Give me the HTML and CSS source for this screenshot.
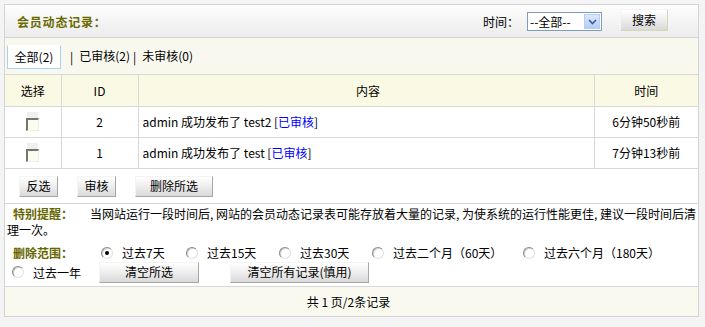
FILE: index.html
```html
<!DOCTYPE html>
<html>
<head>
<meta charset="utf-8">
<link rel="stylesheet" href="styles.css">
</head>
<body>
<div class="box">
  <div class="head">
    <div class="title">会员动态记录：</div>
    <div class="search">
      <span class="lbl">时间：</span>
      <span class="sel"><span class="sel-text">--全部--</span><span class="sel-btn"><svg width="9" height="6" viewBox="0 0 9 6"><path d="M1 1 L4.5 4.5 L8 1" fill="none" stroke="#3a5f9f" stroke-width="1.6"/></svg></span></span>
      <span class="btn btn-search">搜索</span>
    </div>
  </div>
  <div class="tabs">
    <span class="tab active">全部(2)</span>
    <span class="tab-sep">|</span>
    <span class="tab">已审核(2)</span>
    <span class="tab-sep">|</span>
    <span class="tab">未审核(0)</span>
  </div>
  <table class="grid">
    <tr class="hdr">
      <td class="c1">选择</td>
      <td class="c2">ID</td>
      <td class="c3 center">内容</td>
      <td class="c4">时间</td>
    </tr>
    <tr>
      <td class="c1"><span class="chk"></span></td>
      <td class="c2">2</td>
      <td class="c3">admin 成功发布了 test2 [<a class="link">已审核</a>]</td>
      <td class="c4">6分钟50秒前</td>
    </tr>
    <tr>
      <td class="c1"><span class="chk"></span></td>
      <td class="c2">1</td>
      <td class="c3">admin 成功发布了 test [<a class="link">已审核</a>]</td>
      <td class="c4">7分钟13秒前</td>
    </tr>
  </table>
  <div class="actions">
    <span class="btn b-small">反选</span>
    <span class="btn b-small">审核</span>
    <span class="btn b-wide">删除所选</span>
  </div>
  <div class="notice">
    <p class="tip"><b class="olive tip-label">特别提醒：</b><span>当网站运行一段时间后, 网站的会员动态记录表可能存放着大量的记录, 为使系统的运行性能更佳, 建议一段时间后清</span><span>理一次。</span></p>
    <div class="range">
      <b class="olive range-label">删除范围：</b>
      <span class="opt w1"><span class="radio on"></span>过去7天</span>
      <span class="opt w2"><span class="radio"></span>过去15天</span>
      <span class="opt w3"><span class="radio"></span>过去30天</span>
      <span class="opt w4"><span class="radio"></span>过去二个月（60天）</span>
      <span class="opt"><span class="radio"></span>过去六个月（180天）</span>
    </div>
    <div class="range2">
      <span class="opt w6"><span class="radio"></span>过去一年</span>
      <span class="btn b-clear1">清空所选</span>
      <span class="btn b-clear2">清空所有记录(慎用)</span>
    </div>
  </div>
  <div class="foot">共 1 页/2条记录</div>
</div>
</body>
</html>
```
FILE: styles.css
```css
* { box-sizing: border-box; }
html, body { background: #f4f4f4; }
body {
  margin: 4px;
  font-family: "Noto Sans CJK SC", "Liberation Sans", sans-serif;
  font-size: 12px;
  color: #000;
}
.box {
  width: 695px;
  background: #fff;
  border: 1px solid #d4d4d4;
}
.head {
  height: 33px;
  border-bottom: 1px solid #d4d4d4;
  background: linear-gradient(#fdfdfd, #ececec);
  display: flex;
  align-items: center;
  justify-content: space-between;
  padding: 0 30px 0 12px;
}
.title { font-weight: bold; color: #6a6a00; font-size: 12px; letter-spacing: 0.8px; }
.search { display: flex; align-items: center; }
.lbl { margin-right: 8px; }
.sel {
  display: flex; align-items: center;
  width: 75px; height: 19px;
  border: 1px solid #7f9db9; background: #fff;
  padding: 0 1px 0 2px;
  justify-content: space-between;
  margin-top: 1px;
}
.sel-text { line-height: 16px; }
.sel-btn {
  width: 16px; height: 15px;
  background: linear-gradient(#dce8fc, #b4ccf6);
  border: 1px solid #b8cdf2;
  display: flex; align-items: center; justify-content: center;
}
.btn {
  display: inline-flex; align-items: center; justify-content: center;
  height: 21px;
  background: linear-gradient(#ffffff, #f1f1f1 40%, #d9d9d9);
  border: 1px solid;
  border-color: #f4f4f4 #a6a6a6 #a6a6a6 #f4f4f4;
  line-height: 16px;
}
.btn-search { width: 48px; height: 22px; margin-left: 18px; margin-bottom: 2px; border-color: #f4f4f4 #d7d7b8 #d7d7b8 #f4f4f4; }
.tabs {
  height: 37px;
  border-bottom: 1px solid #d8d8d8;
  background: #f8f8ef;
  display: flex; align-items: flex-start;
  padding: 7px 0 0 2px;
}
.tab { line-height: 22px; }
.tab.active {
  height: 24px; width: 54px;
  background: #fff;
  border: 1px solid #a9d0ee;
  border-top-color: #fff;
  text-align: center;
  margin-right: 6px;
}
.tab-sep { line-height: 24px; margin: 0 6px 0 2px; }
.tab + .tab-sep { margin: 0 6px 0 3px; }
.grid { border-collapse: collapse; width: 693px; table-layout: fixed; }
.grid td {
  height: 31px;
  border-bottom: 1px solid #d8d8d8;
  border-right: 1px solid #d8d8d8;
  text-align: center;
  padding: 0;
}
.grid td.c4 { border-right: none; }
.hdr td { background: #fafae4; }
.c1 { width: 56px; }
.c2 { width: 77px; }
.c3 { width: 456px; }
.grid td.c3 { text-align: left; padding-left: 4px; }
.grid td.c3.center { text-align: center; }
.link { color: #0000ff; }
.chk {
  display: inline-block;
  width: 13px; height: 13px;
  background: #fbfbef;
  border-top: 2px solid #76756a;
  border-left: 2px solid #76756a;
  border-right: 1px solid #f0efe2;
  border-bottom: 1px solid #f0efe2;
  vertical-align: middle;
  box-shadow: 0 -7px 0 -1px #efefef;
  margin-top: 2px;
}
.actions {
  height: 35px;
  border-bottom: 1px solid #d8d8d8;
  display: flex; align-items: flex-start;
  padding: 7px 0 0 14px;
  gap: 19px;
}
.b-small { width: 39px; }
.b-wide { width: 78px; }
.notice { padding: 2px 0 0 2px; height: 83px; border-bottom: 1px solid #d8d8d8; }
.tip { margin: 0; line-height: 16px; width: 691px; }
.olive { color: #666600; }
.tip-label { padding-left: 6px; padding-right: 17px; }
.range { display: flex; align-items: center; height: 16px; margin-top: 7px; padding-left: 6px; }
.range-label { width: 88px; }
.opt { display: inline-flex; align-items: center; }
.w1 { width: 85px; }
.w2 { width: 93px; }
.w3 { width: 93px; }
.w4 { width: 151px; }
.w6 { width: 87px; }
.radio {
  display: inline-block;
  width: 12px; height: 12px;
  border-radius: 50%;
  border: 1px solid;
  border-color: #8a8a8a #e2e2e2 #e2e2e2 #8a8a8a;
  background: #fff;
  box-shadow: inset 1px 1px 0 #d0d0d0;
  margin-right: 9px;
  position: relative;
}
.radio.on::after {
  content: "";
  position: absolute; left: 3px; top: 3px;
  width: 4px; height: 4px; border-radius: 50%;
  background: #000;
}
.range2 { display: flex; align-items: center; height: 21px; margin-top: 1px; padding-left: 5px; }
.b-clear1 { width: 100px; }
.b-clear2 { width: 139px; margin-left: 31px; }
.foot {
  height: 29px;
  background: #f9f9ef;
  display: flex; align-items: center; justify-content: center;
  padding-right: 6px;
}
```
